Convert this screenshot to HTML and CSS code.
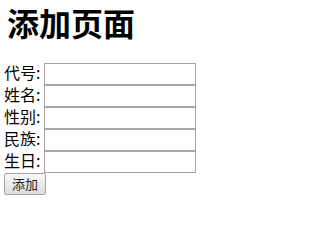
FILE: index.html
```html
<!DOCTYPE html>
<html lang="zh">
<head>
<meta charset="utf-8">
<title>添加页面</title>
<link rel="stylesheet" href="styles.css">
</head>
<body>
<div class="page">
  <h1 class="title">添加页面</h1>
  <form class="form">
    <div class="row"><label class="label">代号:</label><input class="field" type="text"></div>
    <div class="row"><label class="label">姓名:</label><input class="field" type="text"></div>
    <div class="row"><label class="label">性别:</label><input class="field" type="text"></div>
    <div class="row"><label class="label">民族:</label><input class="field" type="text"></div>
    <div class="row"><label class="label">生日:</label><input class="field" type="text"></div>
    <button class="btn" type="button">添加</button>
  </form>
</div>
</body>
</html>
```
FILE: styles.css
```css
body {
  margin: 0;
  background: #fff;
  color: #000;
  font-family: "Noto Sans CJK SC", "Noto Sans", sans-serif;
}
.page {
  padding: 6px 4px 0 4px;
}
.title {
  margin: 0 0 0 3px;
  font-size: 32px;
  line-height: 32px;
  font-weight: bold;
}
.form {
  margin: 25px 0 0 0;
  display: flex;
  flex-direction: column;
  align-items: flex-start;
}
.row {
  display: flex;
  height: 22px;
}
.label {
  width: 40px;
  font-size: 16px;
  line-height: 18px;
  color: #000;
}
.field {
  box-sizing: border-box;
  width: 152px;
  height: 22px;
  margin: 0;
  padding: 0 2px;
  border: 1px solid #a5a5a5;
  background: #fff;
  outline: none;
}
.btn {
  box-sizing: border-box;
  width: 42px;
  height: 22px;
  margin: 0;
  padding: 0;
  border: 1px solid #a3a3a3;
  border-radius: 2px;
  background: linear-gradient(#f7f7f7, #dedede);
  color: #222;
  font-family: "Noto Sans CJK SC", sans-serif;
  font-size: 13px;
  line-height: 20px;
}
```
